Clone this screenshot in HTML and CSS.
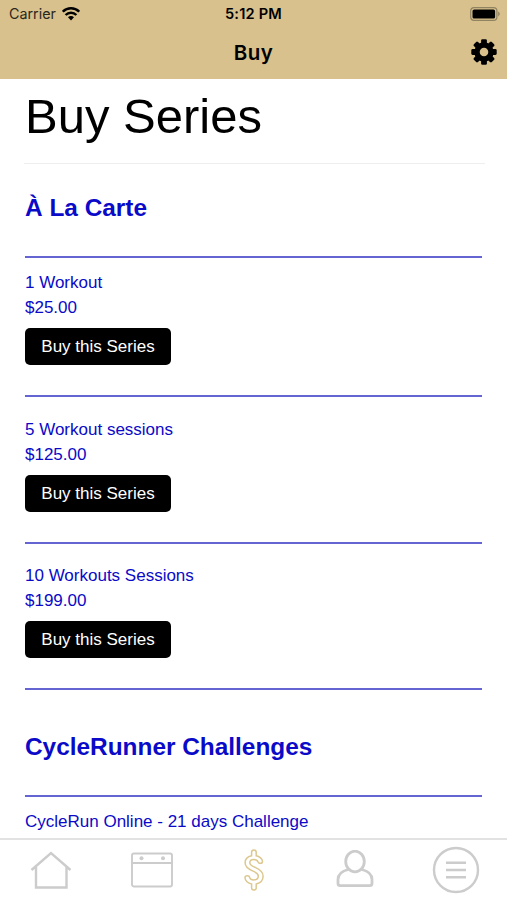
FILE: index.html
```html
<!DOCTYPE html>
<html>
    <head>
        <title>Buy</title>
        <meta charset="UTF-8">
        <meta name="viewport" content="width=device-width, initial-scale=1.0">
        <link rel="stylesheet" href="styles.css">
    </head>
    <body>
        <div class="app">
            <header class="header">
                <div class="status-bar">
                    <div class="carrier">
                        <span>Carrier</span>
                        <svg width="18" height="14" viewBox="0 0 18 14">
                            <g fill="none" stroke="#000" stroke-width="2.5">
                                <path d="M.8 4.700a11.700 11.700 0 0 1 16.400 0"/>
                                <path d="M3.600 8a7.500 7.500 0 0 1 10.800 0"/>
                            </g>
                            <path d="M9 13.500l-3-3.200a4.200 4.200 0 0 1 6 0z"/>
                        </svg>
                    </div>
                    <span class="time">5:12 PM</span>
                    <svg class="battery" width="31" height="14" viewBox="0 0 31 14">
                        <rect x=".7" y=".7" width="26.2" height="12.6" rx="3.4" fill="none" stroke="#8f8362" stroke-width="1.2"/>
                        <rect x="2.5" y="2.5" width="22.6" height="9" rx="1.6"/>
                        <path d="M28.2 4.6c2 .9 2 3.9 0 4.8z" fill="#8f8362"/>
                    </svg>
                </div>
                <div class="nav-bar">
                    <h1 class="nav-title">Buy</h1>
                    <svg class="gear" width="26" height="26" viewBox="-13 -13 26 26">
                        <circle r="7" fill="none" stroke="#000" stroke-width="5.400"/>
                        <g id="teeth">
                            <rect x="-2.900" y="-12.700" width="5.800" height="5" rx="1.300"/>
                            <rect x="-2.900" y="7.700" width="5.800" height="5" rx="1.300"/>
                            <rect x="-12.700" y="-2.900" width="5" height="5.800" rx="1.300"/>
                            <rect x="7.700" y="-2.900" width="5" height="5.800" rx="1.300"/>
                        </g>
                        <use href="#teeth" transform="rotate(45)"/>
                    </svg>
                </div>
            </header>

            <main class="content">
                <h2 class="page-title">Buy Series</h2>

                <section class="category">
                    <h3>À La Carte</h3>
                    <div class="series">
                        <p>1 Workout</p>
                        <p>$25.00</p>
                        <button type="button" class="btn">Buy this Series</button>
                    </div>
                    <div class="series">
                        <p>5 Workout sessions</p>
                        <p>$125.00</p>
                        <button type="button" class="btn">Buy this Series</button>
                    </div>
                    <div class="series">
                        <p>10 Workouts Sessions</p>
                        <p>$199.00</p>
                        <button type="button" class="btn">Buy this Series</button>
                    </div>
                </section>

                <section class="category">
                    <h3>CycleRunner Challenges</h3>
                    <div class="series">
                        <p>CycleRun Online - 21 days Challenge</p>
                    </div>
                </section>
            </main>

            <nav class="tab-bar">
                <a class="tab">
                    <svg width="42" height="40" viewBox="0 0 42 40">
                        <path d="M1.500 20L21 3l19.500 17M6 17v20.500h30.500V17" stroke-width="2.400"/>
                    </svg>
                </a>
                <a class="tab">
                    <svg width="42" height="40" viewBox="0 0 42 40">
                        <rect x="1" y="3.500" width="40" height="33" rx="2" stroke-width="1.900"/>
                        <path d="M1 13h40" stroke-width="1.900"/>
                        <circle cx="10.500" cy="8.300" r="2" fill="#ccc" stroke="none"/>
                        <circle cx="32" cy="8.300" r="2" fill="#ccc" stroke="none"/>
                    </svg>
                </a>
                <a class="tab active">
                    <svg width="20" height="42" viewBox="0 0 20 42">
                        <path d="M7.600 6.800V3.200a2.300 2.300 0 0 1 4.600 0v3.600c3.200.6 6.300 2.900 6.300 5.600 0 2.400-4 2.700-4.600.4-.5-1.500-2-2.200-4-2.200-2.500 0-4.100 1.200-4.100 3.100 0 2.400 2.200 3.300 5.400 4.700 4.200 1.900 7.900 3.900 7.900 8.500 0 4.500-3.200 7.200-6.900 8.100v3.800a2.300 2.300 0 0 1-4.600 0V35c-3.600-.5-6.600-3.300-6.600-6.300 0-2.600 4.200-2.800 4.700-.2.400 1.500 2 2.400 4 2.400 2.700 0 4.600-1.500 4.600-3.900 0-2.400-2.500-3.700-5.800-5.100-3.900-1.700-7.400-3.700-7.400-8.100 0-3.700 2.900-6.300 6.500-7z" stroke-width="1.500"/>
                    </svg>
                </a>
                <a class="tab">
                    <svg width="38" height="40" viewBox="0 0 38 40">
                        <ellipse cx="19" cy="11.500" rx="9.300" ry="10.300" stroke-width="2.800"/>
                        <path d="M12.500 19.500C6 21 2 24.500 2 29.500v4q0 2.200 2.200 2.200h29.600q2.200 0 2.200-2.200v-4c0-5-4-8.500-10.500-10" stroke-width="2.800"/>
                    </svg>
                </a>
                <a class="tab">
                    <svg width="48" height="48" viewBox="0 0 48 48">
                        <circle cx="24" cy="24" r="22" stroke-width="2.400"/>
                        <path d="M14 16.700h20M14 24h20M14 31.300h20" stroke-width="2.600"/>
                    </svg>
                </a>
            </nav>
        </div>
    </body>
</html>
```
FILE: styles.css
```css
* {box-sizing: border-box;}

body {
    margin: 0;
    background: #fff;
    font-family: "Liberation Sans", Arial, Helvetica, sans-serif;
}

.app {
    display: flex;
    flex-direction: column;
    height: 900px;
    overflow: hidden;
}

/* Status bar and title */
.header {
    flex: none;
    height: 79px;
    background: #d8c18d;
    font-family: Inter, Roboto, sans-serif;
}
.status-bar {
    display: grid;
    grid-template-columns: 1fr auto 1fr;
    align-items: center;
    height: 27px;
    padding: 0 6px 0 9px;
}
.carrier {
    display: flex;
    align-items: center;
    gap: 6px;
    font-size: 14.3px;
    color: #2b271c;
}
.time {
    margin-right: 3px;
    font-size: 14.6px;
    font-weight: 600;
    letter-spacing: .2px;
}
.battery {
    justify-self: end;
}
.nav-bar {
    display: grid;
    grid-template-columns: 1fr auto 1fr;
    align-items: center;
    height: 50px;
    padding: 0 10px;
}
.nav-title {
    grid-column: 2;
    margin: 0;
    font-size: 20.5px;
    font-weight: 600;
    letter-spacing: .5px;
}
.gear {
    justify-self: end;
}

/* Scrolling list */
.content {
    flex: 1;
    min-height: 0;
    overflow: hidden;
    padding: 0 25px;
    color: #0a0ac8;
}
.page-title {
    height: 85px;
    margin: 0 -3px 0 -1px;
    padding-left: 1px;
    border-bottom: 1px solid #eee;
    color: #000;
    font-size: 49px;
    font-weight: normal;
    line-height: 74px;
}
.category h3 {
    height: 94px;
    margin: 0;
    border-bottom: 2px solid #6464d2;
    font-size: 24.4px;
    line-height: 28px;
    padding-top: 30px;
}
.category + .category h3 {
    height: 107px;
    padding-top: 43px;
}
.series {
    height: 147px;
    padding-top: 21px;
    border-bottom: 2px solid #6464d2;
}
h3 + .series {
    height: 139px;
    padding-top: 13px;
}
.series:last-child {
    height: 146px;
    padding-top: 20px;
}
.category + .category .series {
    padding-top: 13px;
}
.series p {
    margin: 0;
    font-size: 17px;
    line-height: 24.5px;
}
.btn {
    display: block;
    width: 146px;
    height: 37px;
    margin-top: 8px;
    padding: 0;
    border: none;
    border-radius: 5px;
    background: #000;
    color: #fff;
    font-family: inherit;
    font-size: 17px;
}

/* Bottom tabs */
.tab-bar {
    flex: none;
    display: flex;
    height: 62px;
    border-top: 2px solid #e2e2e2;
    background: #fff;
}
.tab {
    flex: 1;
    display: flex;
    align-items: center;
    justify-content: center;
}
.tab svg {
    fill: none;
    stroke: #ccc;
}
.active svg {
    stroke: #dcc88f;
}
```
